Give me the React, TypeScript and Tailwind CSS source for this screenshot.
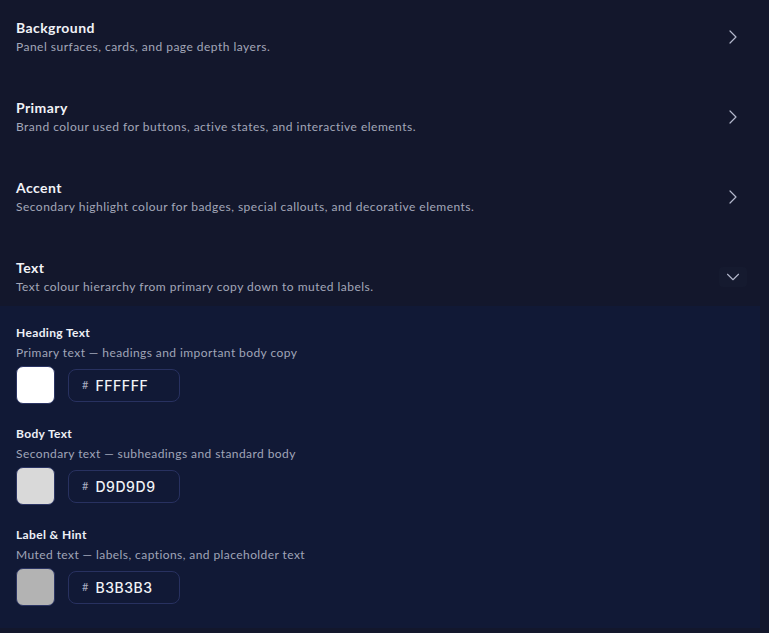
import { ChevronDown, ChevronRight } from "lucide-react";

const groups = [
  { title: "Background", desc: "Panel surfaces, cards, and page depth layers." },
  { title: "Primary", desc: "Brand colour used for buttons, active states, and interactive elements." },
  { title: "Accent", desc: "Secondary highlight colour for badges, special callouts, and decorative elements." },
];

const textColours = [
  { label: "Heading Text", desc: "Primary text — headings and important body copy", hex: "FFFFFF" },
  { label: "Body Text", desc: "Secondary text — subheadings and standard body", hex: "D9D9D9" },
  { label: "Label & Hint", desc: "Muted text — labels, captions, and placeholder text", hex: "B3B3B3" },
];

function GroupHeader({ title, desc, open }: { title: string; desc: string; open?: boolean }) {
  return (
    <div
      className={`flex justify-between pl-4 pr-[13px] ${
        open ? "h-[63px] items-start pt-[15px]" : "h-[67px] items-center"
      }`}
    >
      <div className="flex flex-col">
        <span className="text-[14px] leading-5 font-bold tracking-[0.03em] text-[#f1f2f7]">{title}</span>
        <span className="text-[12px] leading-[18px] tracking-[0.04em] text-[#a3a7b9]">{desc}</span>
      </div>
      {open ? (
        <div className="mt-[9px] flex h-[20px] w-[28px] items-center justify-center rounded bg-[#151a2f]">
          <ChevronDown size={22} strokeWidth={1.2} className="text-[#b3b8cc]" />
        </div>
      ) : (
        <div className="flex h-[20px] w-[28px] items-center justify-center">
          <ChevronRight size={24} strokeWidth={1.2} className="text-[#b3b8cc]" />
        </div>
      )}
    </div>
  );
}

export default function App() {
  return (
    <div
      className="min-h-screen bg-[#13172c] pt-[3px]"
      style={{ fontFamily: "Lato, 'Noto Sans', sans-serif" }}
    >
      <div className="mr-[9px] flex flex-col gap-[13px]">
        {groups.map((g) => (
          <GroupHeader key={g.title} title={g.title} desc={g.desc} />
        ))}
        <div>
          <GroupHeader title="Text" desc="Text colour hierarchy from primary copy down to muted labels." open />
          <div className="flex flex-col gap-[22px] bg-[#111936] px-4 pt-[19px] pb-[22px]">
            {textColours.map((c) => (
              <div key={c.hex} className="flex flex-col">
                <span className="text-[12px] leading-4 font-bold tracking-[0.03em] text-[#eef0f6]">{c.label}</span>
                <span className="mt-1 text-[12px] leading-4 tracking-[0.035em] text-[#a0a5b8]">{c.desc}</span>
                <div className="mt-[5px] flex items-center gap-[13px]">
                  <div
                    className="h-[38px] w-[39px] rounded-[7px] border border-[#2b3463]"
                    style={{ backgroundColor: `#${c.hex}` }}
                  />
                  <div className="flex h-[33px] w-[112px] items-center rounded-[8px] border border-[#283160] bg-[#111936] pl-[13px]">
                    <span className="text-[11px] text-[#a7acc0]">#</span>
                    <span
                      className="ml-[7px] text-[14px] font-medium tracking-[0.04em] text-[#f2f3f7]"
                      style={{ fontFamily: "Inter, sans-serif" }}
                    >
                      {c.hex}
                    </span>
                  </div>
                </div>
              </div>
            ))}
          </div>
        </div>
      </div>
    </div>
  );
}
